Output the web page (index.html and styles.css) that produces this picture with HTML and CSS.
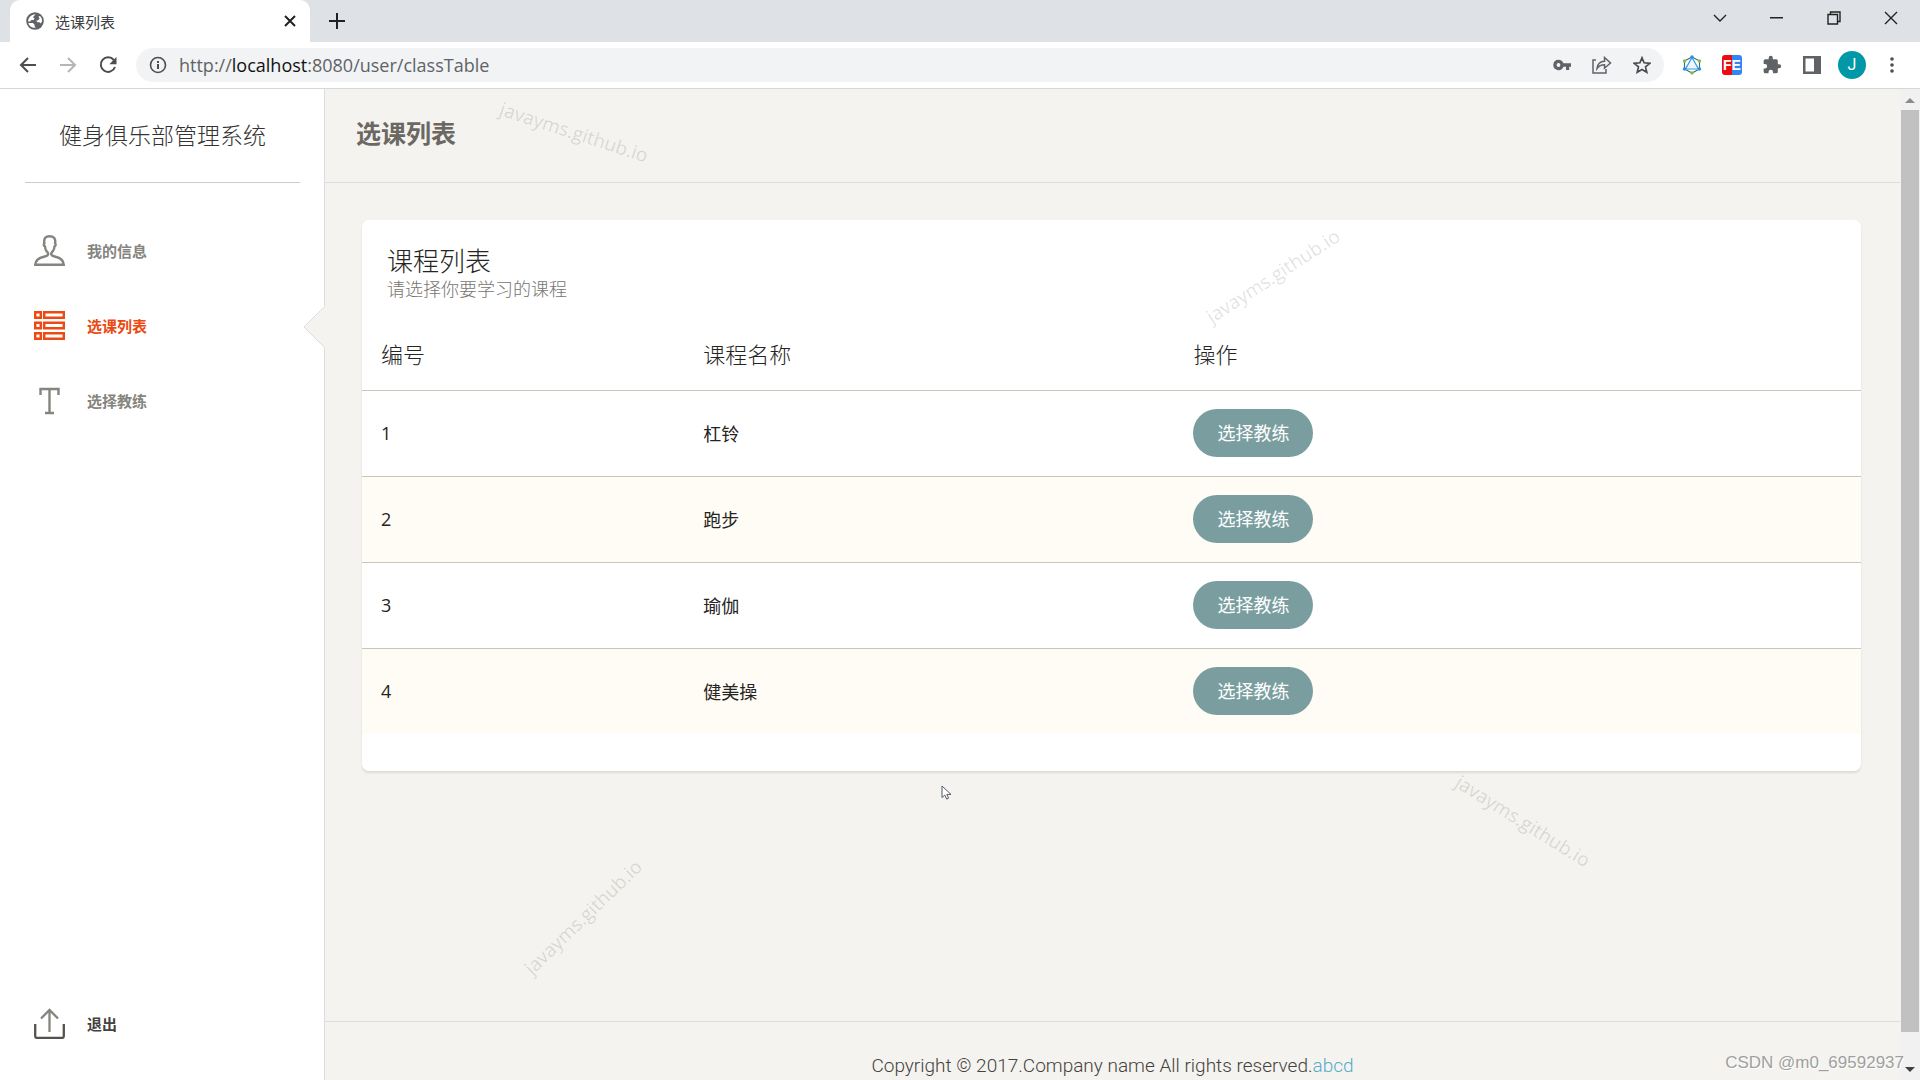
FILE: index.html
```html
<!DOCTYPE html>
<html lang="zh-CN">
<head>
<meta charset="utf-8">
<meta name="viewport" content="width=device-width, initial-scale=1">
<title>选课列表</title>
<link rel="stylesheet" href="styles.css">
</head>
<body>
<div class="tabstrip">
  <div class="tab">
    <svg class="favicon" width="18" height="18" viewBox="0 0 18 18"><circle cx="9" cy="9" r="8.8" fill="#5f6368"/><path d="M9.5 2.2 7 5.2l1.6 1.4-1 1.4H5.4L4 9.6H2.1C2 6 4.800 2.300 9.500 2.200zM2.300 11h4.500l1.700 1.600v1.500l1.300 1.600c-3.600.6-6.700-1.500-7.500-4.700zM12.500 4.500l1.500-.6c1.500 1.500 2.200 3.300 2.100 5.300l-1.300 2.200-1.300-1.200h-2.100l-1.200-1.600h1.500l1.900-1.900z" fill="#fff"/></svg>
    <span class="tab-title">选课列表</span>
    <button class="tab-btn" aria-label="关闭标签页"><svg width="12" height="12" viewBox="0 0 12 12" fill="none" stroke="#202124" stroke-width="2"><path d="m1 1 10 10M11 1 1 11"/></svg></button>
  </div>
  <button class="new-tab" aria-label="新建标签页"><svg width="16" height="16" viewBox="0 0 16 16" fill="none" stroke="#202124" stroke-width="2"><path d="M8 0v16M0 8h16"/></svg></button>
  <div class="window-controls">
    <button aria-label="搜索标签页"><svg width="14" height="8" viewBox="0 0 14 8" fill="none" stroke="#222" stroke-width="1.400"><path d="m1 1 6 6 6-6"/></svg></button>
    <button aria-label="最小化"><svg width="13" height="2" viewBox="0 0 13 2"><path d="M0 0h13v1.500H0z" fill="#222"/></svg></button>
    <button aria-label="还原"><svg width="14" height="14" viewBox="0 0 14 14" fill="none" stroke="#222" stroke-width="1.400"><path d="M1 3.500h9.500V13H1zM3.500 3.500V1H13v9.500h-2.500"/></svg></button>
    <button aria-label="关闭"><svg width="14" height="14" viewBox="0 0 14 14" fill="none" stroke="#222" stroke-width="1.400"><path d="m1 1 12 12M13 1 1 13"/></svg></button>
  </div>
</div>
<div class="toolbar">
  <div class="tool-group">
    <button aria-label="后退"><svg width="18" height="16" viewBox="0 0 18 16" fill="none" stroke="#4a4d51" stroke-width="2"><path d="M17 8H2M9 1 2 8l7 7"/></svg></button>
    <button aria-label="前进"><svg width="18" height="16" viewBox="0 0 18 16" fill="none" stroke="#b4b6b9" stroke-width="2"><path d="M1 8h15M9 1l7 7-7 7"/></svg></button>
    <button aria-label="重新加载"><svg width="18" height="18" viewBox="0 0 18 18"><path d="M14.800 4A7.300 7.300 0 1 0 16 11" fill="none" stroke="#4a4d51" stroke-width="2"/><path d="M17.500 1v7.200h-7.200z" fill="#4a4d51"/></svg></button>
  </div>
  <div class="omnibox">
    <svg width="18" height="18" viewBox="0 0 18 18"><circle cx="9" cy="9" r="7.500" fill="none" stroke="#4a4d51" stroke-width="1.600"/><path d="M8 8h2v5H8zM8 5h2v2H8z" fill="#4a4d51"/></svg>
    <span class="url">http://<b>localhost</b>:8080/user/classTable</span>
    <div class="tool-group">
      <button aria-label="密码"><svg width="18" height="12" viewBox="0 0 18 12"><path d="M5.500.8a5.200 5.200 0 1 0 4.900 7H13V11h3.200V7.800H18v-3.500h-7.600A5.200 5.200 0 0 0 5.500.8zm0 3.300a1.900 1.900 0 1 1 0 3.800 1.900 1.900 0 0 1 0-3.800z" fill="#5f6368"/></svg></button>
      <button aria-label="分享"><svg width="20" height="18" viewBox="0 0 20 18" fill="none" stroke="#5f6368" stroke-width="1.500"><path d="M4 4H1v13h13v-4M5 12.500C5.500 8 8 5.500 12.500 5.300V1.500L18.500 7l-6 5.200V8.700C9 8.700 6.800 10 5 12.500z"/></svg></button>
      <button aria-label="收藏"><svg width="18" height="18" viewBox="0 0 18 18" fill="none" stroke="#4a4d51" stroke-width="1.700"><path d="m9 1.800 2.100 5 5.700.5-4.300 3.600 1.300 5.400L9 13.500l-4.800 2.800 1.300-5.400L1.200 7.300l5.700-.5z"/></svg></button>
    </div>
  </div>
  <div class="tool-group">
    <button aria-label="六边形扩展"><svg width="20" height="20" viewBox="0 0 20 20"><path d="m10 2 7.500 4v8L10 18l-7.500-4V6z" fill="none" stroke="#4b6b78" stroke-width="1.200"/><path d="m10 2.500 6.500 11.500h-13z" fill="#eef7fe" stroke="#2e9be6" stroke-width="1.200"/><g fill="#2894e0"><circle cx="10" cy="2" r="1.700"/><circle cx="2.500" cy="14" r="1.700"/><circle cx="17.500" cy="14" r="1.700"/></g><g fill="#7cc142"><circle cx="2.500" cy="6" r="1.700"/><circle cx="17.500" cy="6" r="1.700"/><circle cx="10" cy="18" r="1.700"/></g></svg></button>
    <button aria-label="FE 助手"><span class="fe">FE</span></button>
    <button aria-label="扩展程序"><svg width="20" height="20" viewBox="0 0 24 24"><path d="M20.500 11H19V7a2 2 0 0 0-2-2h-4V3.500a2.500 2.500 0 0 0-5 0V5H4a2 2 0 0 0-2 2v3.800h1.500a2.700 2.700 0 0 1 0 5.400H2V20a2 2 0 0 0 2 2h3.800v-1.500a2.700 2.700 0 0 1 5.400 0V22H17a2 2 0 0 0 2-2v-4h1.500a2.500 2.500 0 0 0 0-5z" fill="#5f6368"/></svg></button>
    <button aria-label="侧边栏"><svg width="18" height="18" viewBox="0 0 18 18"><path d="M0 0h18v18H0zM2.500 2.500v13H11v-13z" fill="#5f6368" fill-rule="evenodd"/></svg></button>
    <button aria-label="用户 J"><span class="avatar">J</span></button>
    <button aria-label="菜单"><svg width="4" height="18" viewBox="0 0 4 18" fill="#4a4d51"><circle cx="2" cy="3" r="1.800"/><circle cx="2" cy="9" r="1.800"/><circle cx="2" cy="15" r="1.800"/></svg></button>
  </div>
</div>
<div class="page">
  <aside class="sidebar">
    <h2 class="brand">健身俱乐部管理系统</h2>
    <nav class="nav">
      <a class="nav-link" href="#info"><svg width="31" height="31" viewBox="0 0 31 31" fill="none" stroke="currentColor" stroke-width="2.400"><path d="M1.200 29.800C1.500 24.500 5.500 22.600 10 21.700c3-.6 4.200-1.200 4.200-2.900 0-1.500-1-1.700-2-3.200-.9-1.300-1.100-3-1.200-4.100-1.400-.6-1.500-2.300-.6-3.100C9.400 3.200 12 1.200 15.500 1.200c4 0 6.500 2 5.600 7.200.9.800.6 2.500-.6 3.100-.1 1.100-.4 2.800-1.300 4.100-1 1.500-2 1.700-2 3.200 0 1.700 1.200 2.300 4.200 2.900 4.500.9 8.100 2.800 8.400 8.100z"/></svg><span>我的信息</span></a>
      <a class="nav-link active" href="#classes"><svg width="31" height="31" viewBox="0 0 31 31" fill="none" stroke="currentColor" stroke-width="2.500"><path d="M1.200 2.200h5.600v5.600H1.200zM10.200 2.200h19.600v5.600H10.200zM1.200 12.700h5.600v5.600H1.200zM10.200 12.700h19.600v5.600H10.200zM1.200 23.200h5.600v5.600H1.200zM10.200 23.200h19.600v5.600H10.200z"/></svg><span>选课列表</span><svg class="notch" width="22" height="42" viewBox="0 0 22 42"><path d="M22 0 1 21l21 21z" fill="#f4f3ef"/><path d="M21 1 1 21l20 20" fill="none" stroke="#ddd"/></svg></a>
      <a class="nav-link" href="#coach"><svg width="31" height="31" viewBox="0 0 31 31" fill="none" stroke="currentColor" stroke-width="2.400"><path d="M6.500 10V4h18v6M15.500 4v24M11 28h9"/></svg><span>选择教练</span></a>
      <a class="nav-link logout" href="#logout"><svg width="31" height="31" viewBox="0 0 31 31" fill="none" stroke-width="2.300"><path d="M15.500 24V2M7 10.500 15.500 2l8.500 8.500" stroke="#85847e"/><path d="M1.200 16v12q0 2 2 2h24.600q2 0 2-2V16" stroke="#55524b"/></svg><span>退出</span></a>
    </nav>
  </aside>
  <main class="main">
    <header class="main-header"><h1>选课列表</h1></header>
    <section class="content">
      <div class="card">
        <div class="card-head">
          <h3>课程列表</h3>
          <p>请选择你要学习的课程</p>
        </div>
        <table>
          <thead><tr><th class="col-id">编号</th><th class="col-name">课程名称</th><th>操作</th></tr></thead>
          <tbody>
            <tr><td>1</td><td>杠铃</td><td><button class="btn">选择教练</button></td></tr>
            <tr><td>2</td><td>跑步</td><td><button class="btn">选择教练</button></td></tr>
            <tr><td>3</td><td>瑜伽</td><td><button class="btn">选择教练</button></td></tr>
            <tr><td>4</td><td>健美操</td><td><button class="btn">选择教练</button></td></tr>
          </tbody>
        </table>
      </div>
    </section>
    <footer class="footer">Copyright © 2017.Company name All rights reserved.<a href="#abcd">abcd</a></footer>
  </main>
  <div class="scrollbar">
    <svg width="10" height="5" viewBox="0 0 10 5"><path d="M0 5 5 0l5 5z" fill="#8b8b8b"/></svg>
    <div class="thumb"></div>
    <svg width="10" height="5" viewBox="0 0 10 5"><path d="M0 0h10L5 5z" fill="#404040"/></svg>
  </div>
</div>
<span class="mark mark-a">javayms.github.io</span>
<span class="mark mark-b">javayms.github.io</span>
<span class="mark mark-c">javayms.github.io</span>
<span class="mark mark-d">javayms.github.io</span>
<span class="credit">CSDN @m0_69592937</span>
<svg class="cursor" width="11" height="15" viewBox="0 0 11 15"><path d="M1 1v11.500l2.800-2.400 1.900 4 1.900-.9-1.800-3.800H10z" fill="#fff" stroke="#555a66"/></svg>
</body>
</html>
```
FILE: styles.css
```css
* {
  box-sizing: border-box;
}

body {
  margin: 0;
  height: 100vh;
  display: flex;
  flex-direction: column;
  overflow: hidden;
  position: relative;
  font-family: "Open Sans", "Noto Sans CJK SC", sans-serif;
  font-size: 18px;
  color: #252422;
  background: #fff;
}

h1, h2, h3, p {
  margin: 0;
}

button {
  border: 0;
  padding: 0;
  background: none;
  font: inherit;
  color: inherit;
}

svg {
  display: block;
  flex: none;
}

/* Browser frame */
.tabstrip {
  flex: none;
  display: flex;
  height: 42px;
  padding-left: 10px;
  background: #dee1e6;
}

.tab {
  display: flex;
  align-items: center;
  width: 300px;
  padding: 0 10px 0 16px;
  border-radius: 10px 10px 0 0;
  background: #fff;
}

.tab-title {
  flex: 1;
  margin-left: 11px;
  font-size: 15px;
  color: #3c4043;
}

.tab-btn,
.new-tab,
.window-controls button,
.tool-group button {
  display: flex;
  align-items: center;
  justify-content: center;
}

.tab-btn {
  width: 20px;
  height: 20px;
}

.new-tab {
  width: 54px;
}

.window-controls {
  display: flex;
  height: 36px;
  margin-left: auto;
  padding-right: 1px;
}

.window-controls button {
  width: 57px;
}

.toolbar {
  flex: none;
  display: flex;
  align-items: center;
  gap: 8px;
  height: 47px;
  padding: 0 8px;
  border-bottom: 1px solid #d5d7da;
}

.tool-group {
  display: flex;
}

.tool-group button {
  width: 40px;
  height: 34px;
}

.omnibox {
  flex: 1;
  display: flex;
  align-items: center;
  height: 34px;
  padding: 0 2px 0 13px;
  border-radius: 17px;
  background: #f1f3f4;
}

.url {
  flex: 1;
  margin-left: 12px;
  font-size: 18px;
  color: #5f6368;
}

.url b {
  font-weight: 400;
  color: #111;
}

.fe {
  width: 20px;
  height: 20px;
  border-radius: 3px;
  background: linear-gradient(90deg, #ee0a12 50%, #3484f5 50%);
  color: #fff;
  font: 700 14px/20px "Liberation Sans", sans-serif;
}

.avatar {
  width: 28px;
  height: 28px;
  border-radius: 50%;
  background: #0097a7;
  color: #fff;
  font: 16px/28px Roboto, sans-serif;
}

/* Page */
.page {
  flex: 1;
  display: flex;
  min-height: 0;
}

.sidebar {
  flex: none;
  display: flex;
  flex-direction: column;
  width: 325px;
  padding: 0 24px 19px 25px;
  border-right: 1px solid #ddd;
}

.brand {
  height: 94px;
  border-bottom: 1px solid #ccc;
  font-size: 23px;
  font-weight: 300;
  line-height: 92px;
  text-align: center;
  color: #333;
}

.nav {
  flex: 1;
  display: flex;
  flex-direction: column;
  padding-top: 30px;
}

.nav-link {
  position: relative;
  display: flex;
  align-items: center;
  gap: 22px;
  height: 75px;
  padding-left: 9px;
  font-size: 15px;
  font-weight: 700;
  color: #85847e;
  text-decoration: none;
}

.nav-link.active {
  color: #eb4a12;
}

.nav-link.logout {
  margin-top: auto;
  color: #44423d;
}

.notch {
  position: absolute;
  top: 18px;
  right: -25px;
}

.main {
  flex: 1;
  display: flex;
  flex-direction: column;
  min-width: 0;
  background: #f4f3ef;
}

.main-header {
  flex: none;
  height: 94px;
  padding-left: 31px;
  border-bottom: 1px solid #ddd;
}

.main-header h1 {
  font-size: 25px;
  line-height: 88px;
  color: #6b6864;
}

.content {
  flex: 1;
  padding: 37px 39px 0 37px;
}

.card {
  padding: 24px 0 37px;
  border-radius: 7px;
  background: #fff;
  box-shadow: 0 2px 2px rgba(204, 197, 185, 0.5);
}

.card-head {
  padding: 0 25px 20px;
}

.card-head h3 {
  font-size: 26px;
  font-weight: 300;
  line-height: 34px;
}

.card-head p {
  font-size: 18px;
  font-weight: 300;
  line-height: 22px;
  color: #77746f;
}

table {
  width: 100%;
  border-collapse: collapse;
  table-layout: fixed;
}

.col-id {
  width: 21.500%;
}

.col-name {
  width: 32.700%;
}

th {
  height: 70px;
  padding: 0 19px 4px;
  font-size: 22px;
  font-weight: 300;
  text-align: left;
}

td {
  height: 86px;
  padding: 0 19px;
  border-top: 1px solid #ccc5b9;
}

tbody tr:nth-child(even) {
  background: #fffcf5;
}

.btn {
  display: block;
  width: 120px;
  height: 48px;
  padding-bottom: 2px;
  border-radius: 24px;
  background: #7a9e9f;
  color: #fff;
}

.footer {
  flex: none;
  height: 59px;
  border-top: 1px solid #ddd;
  font-family: Roboto, "Open Sans", sans-serif;
  font-size: 19px;
  font-weight: 300;
  line-height: 88px;
  text-align: center;
  color: #44423d;
}

.footer a {
  color: #55acc8;
  text-decoration: none;
}

.scrollbar {
  flex: none;
  display: flex;
  flex-direction: column;
  align-items: center;
  justify-content: space-between;
  width: 20px;
  padding: 9px 1px 8px;
  background: #f1f1f1;
}

.thumb {
  flex: 1;
  width: 100%;
  margin: 7px 0 35px;
  background: #c1c1c1;
}

/* Overlays */
.mark {
  position: absolute;
  width: 160px;
  line-height: 28px;
  font-size: 19px;
  text-align: center;
  color: rgba(0, 0, 0, 0.12);
}

.mark-a {
  left: 494px;
  top: 118px;
  transform: rotate(18deg);
}

.mark-b {
  left: 1193px;
  top: 262px;
  transform: rotate(-33deg);
}

.mark-c {
  left: 503px;
  top: 903px;
  transform: rotate(-44deg);
}

.mark-d {
  left: 1443px;
  top: 807px;
  transform: rotate(32deg);
}

.credit {
  position: absolute;
  right: 16px;
  bottom: 5px;
  font: 17px/24px "Liberation Sans", sans-serif;
  color: #a0a0a0;
  text-shadow: 1px 1px 0 #fff;
}

.cursor {
  position: absolute;
  left: 941px;
  top: 785px;
}
```
